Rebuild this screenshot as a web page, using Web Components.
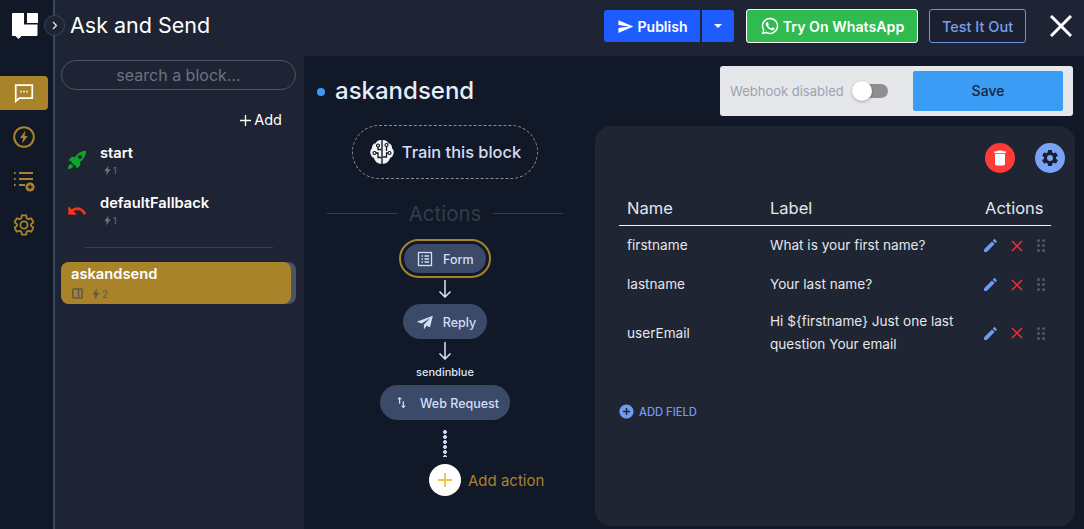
<!DOCTYPE html>
<html>
<head>
<meta charset="utf-8">
<title>Ask and Send</title>
<style>
  html, body { margin: 0; height: 100%; background: #111827; overflow: hidden; }
  body { font-family: Inter, "Noto Sans", sans-serif; }
</style>
</head>
<body>
<app-shell>
  <side-rail slot="rail"></side-rail>
  <top-bar slot="top" heading="Ask and Send"></top-bar>
  <block-panel slot="panel"></block-panel>
  <flow-column slot="flow"></flow-column>
  <div slot="right" style="display:flex;flex-direction:column;align-items:flex-end;height:100%">
    <webhook-bar></webhook-bar>
    <field-card></field-card>
  </div>
</app-shell>

<script>
const P = {
  send: "M2.01 21L23 12 2.01 3 2 10l15 2-15 2z",
  bolt: "M14 1L5 13.5h5.5L9 23l10-13.5h-6z",
  trash: "M6 19c0 1.1.9 2 2 2h8c1.1 0 2-.9 2-2V7H6v12zM19 4h-3.5l-1-1h-5l-1 1H5v2h14V4z",
  gear: "M19.14 12.94c.04-.3.06-.61.06-.94s-.02-.64-.07-.94l2.03-1.58a.49.49 0 0 0 .12-.61l-1.92-3.32a.49.49 0 0 0-.59-.22l-2.39.96c-.5-.38-1.03-.7-1.62-.94l-.36-2.54a.48.48 0 0 0-.48-.41h-3.84c-.24 0-.43.17-.47.41l-.36 2.54c-.59.24-1.13.57-1.62.94l-2.39-.96c-.22-.08-.47 0-.59.22L2.74 8.87c-.12.21-.08.47.12.61l2.03 1.58c-.05.3-.09.63-.09.94s.02.64.07.94l-2.03 1.58a.49.49 0 0 0-.12.61l1.92 3.32c.12.22.37.29.59.22l2.39-.96c.5.38 1.03.7 1.62.94l.36 2.54c.05.24.24.41.48.41h3.84c.24 0 .44-.17.47-.41l.36-2.54c.59-.24 1.13-.56 1.62-.94l2.39.96c.22.08.47 0 .59-.22l1.92-3.32c.12-.22.07-.47-.12-.61l-2.01-1.58zM12 15.6A3.6 3.6 0 1 1 12 8.4a3.6 3.6 0 0 1 0 7.2z",
  edit: "M3 17.25V21h3.75L17.81 9.94l-3.75-3.75L3 17.25zM20.71 7.04c.39-.39.39-1.02 0-1.41l-2.34-2.34c-.39-.39-1.02-.39-1.41 0l-1.83 1.83 3.75 3.75 1.83-1.83z",
  plusCircle: "M12 2C6.48 2 2 6.48 2 12s4.48 10 10 10 10-4.48 10-10S17.52 2 12 2zm5 11h-4v4h-2v-4H7v-2h4V7h2v4h4v2z",
  undo: "M12.5 8c-2.65 0-5.05.99-6.9 2.6L2 7v9h9l-3.62-3.62c1.39-1.16 3.16-1.88 5.12-1.88 3.54 0 6.55 2.31 7.6 5.5l2.37-.78C21.08 11.03 17.15 8 12.5 8z",
  swap: "M16 17.01V10h-2v7.01h-3L15 21l4-3.99h-3zM9 3L5 6.99h3V14h2V6.99h3L9 3z",
  whatsapp: "M12.04 2A9.9 9.9 0 0 0 3.5 16.9L2.1 22l5.24-1.37A9.9 9.9 0 1 0 12.04 2zm0 1.8a8.1 8.1 0 1 1-4.13 15.07l-.3-.18-3.1.81.83-3.03-.2-.31A8.1 8.1 0 0 1 12.04 3.8zM8.6 7.3c-.17 0-.46.06-.7.32-.24.26-.92.9-.92 2.2s.94 2.55 1.07 2.73c.13.17 1.85 2.83 4.49 3.96 2.2.94 2.64.75 3.12.7.48-.04 1.54-.63 1.76-1.24.22-.6.22-1.13.15-1.24-.07-.1-.24-.17-.5-.3-.26-.13-1.54-.76-1.78-.85-.24-.09-.41-.13-.59.13-.17.26-.67.85-.82 1.02-.15.17-.3.2-.56.07-.26-.13-1.1-.41-2.1-1.3-.78-.7-1.3-1.55-1.45-1.81-.15-.26-.02-.4.11-.53.12-.12.26-.3.39-.46.13-.15.17-.26.26-.43.09-.17.04-.33-.02-.46-.07-.13-.58-1.42-.8-1.94-.2-.5-.42-.43-.58-.44z",
  plane: "M22.5 3.5L1 11.5l6.5 2.5L19 6.5 10.5 15.5V22l3.5-5 4.7 2z",
  rocket: "M23 1c-4.7.2-8.6 2-11.7 5.3L9.500 8.300l-4-.1L1.500 12.500l4.300 1-.8 1.200 4.300 4.300 1.200-.8 1 4.300 4.300-4 .1-4.200 2-1.800C21.100 9.500 22.800 5.700 23 1zM15.700 10.700a2.400 2.400 0 1 1 0-4.800 2.400 2.400 0 0 1 0 4.800zM4.500 16.500C2.600 17.200 1.400 19.200 1 23c3.800-.4 5.800-1.600 6.500-3.500z"
};
const svg = (d, size, fill, extra = "") =>
  `<svg width="${size}" height="${size}" viewBox="0 0 24 24" fill="${fill}" style="display:block;flex:none" ${extra}><path d="${d}"/></svg>`;

class AppShell extends HTMLElement {
  constructor() {
    super();
    this.attachShadow({ mode: "open" });
    this.shadowRoot.innerHTML = `
      <style>
        :host { display: grid; grid-template-columns: 53px 2px 249px 291px 1fr; grid-template-rows: 56px 473px; width: 1084px; height: 529px; background: #111827; }
        .rail { grid-row: 1 / 3; grid-column: 1; background: #111827; }
        .rule { grid-row: 1 / 3; grid-column: 2; background: #34495a; }
        .top { grid-row: 1; grid-column: 3 / 6; }
        .panel { grid-row: 2; grid-column: 3; }
        .flow { grid-row: 2; grid-column: 4; }
        .right { grid-row: 2; grid-column: 5; padding-right: 9px; box-sizing: border-box; min-width: 0; }
      </style>
      <div class="rail"><slot name="rail"></slot></div>
      <div class="rule"></div>
      <div class="top"><slot name="top"></slot></div>
      <div class="panel"><slot name="panel"></slot></div>
      <div class="flow"><slot name="flow"></slot></div>
      <div class="right"><slot name="right"></slot></div>`;
  }
}

class SideRail extends HTMLElement {
  constructor() {
    super();
    this.attachShadow({ mode: "open" });
    this.shadowRoot.innerHTML = `
      <style>
        :host { display: flex; flex-direction: column; height: 100%; position: relative; }
        .logo { height: 76px; padding: 13px 0 0 12px; box-sizing: border-box; }
        .item { width: 48px; height: 34px; display: flex; align-items: center; justify-content: center; margin-bottom: 10px; }
        .item.on { background: #a8832a; border-radius: 0 4px 4px 0; }
        .toggle { position: absolute; left: 44px; top: 15px; width: 19px; height: 19px; border: 1px solid #34495a; border-radius: 50%; background: #1e2433; display: flex; align-items: center; justify-content: center; }
      </style>
      <div class="logo">
        <svg width="26" height="27" viewBox="0 0 26 27" fill="#fff" style="display:block">
          <path d="M1 0h11v11.500h13.500V22a1 1 0 0 1-1 1H9.500l-3 3-3-3H1a1 1 0 0 1-1-1V1a1 1 0 0 1 1-1z"/>
          <path d="M15 0h10a1 1 0 0 1 1 1v9H15z"/>
        </svg>
      </div>
      <div class="item on">
        <svg width="22" height="22" viewBox="0 0 24 24" fill="none" stroke="#fff" stroke-width="1.900"><path d="M3 3.500h18v14H7L3 21z"/><path d="M8 10.500h1.600M11.200 10.500h1.600M14.400 10.500H16" stroke-width="2"/></svg>
      </div>
      <div class="item">
        <svg width="24" height="24" viewBox="0 0 24 24" fill="none"><circle cx="12" cy="12" r="9.800" stroke="#a8832a" stroke-width="2"/><path d="M13.400 5.600L8 13h3l-.9 5.400L15.800 11h-3.200z" fill="#a8832a"/></svg>
      </div>
      <div class="item">
        <svg width="24" height="24" viewBox="0 0 24 24" fill="none" stroke="#a8832a" stroke-width="2"><path d="M2 4h1.600M2 10h1.600M2 16h1.600M7 4h14M7 10h14M7 16h6"/><circle cx="18" cy="18" r="4.600" fill="#a8832a" stroke="none"/><path d="M15.700 18h4.600M18 15.700v4.600" stroke="#111827" stroke-width="1.300"/></svg>
      </div>
      <div class="item">
        <svg width="24" height="24" viewBox="0 0 24 24" fill="none" stroke="#a8832a" stroke-width="1.800"><path d="${P.gear}"/></svg>
      </div>
      <div class="toggle">
        <svg width="9" height="9" viewBox="0 0 9 9" fill="none" stroke="#e5e7eb" stroke-width="1.300"><path d="M3 1l3.400 3.500L3 8"/></svg>
      </div>`;
  }
}

class TopBar extends HTMLElement {
  constructor() {
    super();
    this.attachShadow({ mode: "open" });
    this.shadowRoot.innerHTML = `
      <style>
        :host { display: flex; align-items: center; height: 56px; background: #1e2433; padding: 0 12px 4px 15px; box-sizing: border-box; font-family: Inter, sans-serif; }
        h1 { margin: -2px auto 0 0; font: 400 21.500px Inter, sans-serif; color: #fff; }
        .btn { height: 32px; box-sizing: border-box; display: flex; align-items: center; justify-content: center; font-size: 14px; font-weight: 600; color: #fff; border-radius: 3px; }
        .pub { width: 96px; background: #1f5cff; gap: 4px; border-radius: 3px 0 0 3px; }
        .drop { width: 32px; margin-left: 2px; background: #1f5cff; border-radius: 0 3px 3px 0; }
        .caret { width: 0; height: 0; border: 4px solid transparent; border-top: 4px solid #fff; border-bottom: 0; }
        .wa { width: 172px; height: 34px; margin-left: 12px; background: #2fbb4f; border: 1px solid #fff; gap: 3px; font-size: 14.200px; }
        .test { width: 97px; height: 34px; margin-left: 11px; border: 1px solid #6f95e0; color: #7a9fe8; font-weight: 500; font-size: 14.500px; background: #1a2030; }
        .x { margin-left: 24px; display: block; }
      </style>
      <h1></h1>
      <div class="btn pub">${svg(P.send, 17, "#fff")}<span>Publish</span></div>
      <div class="btn drop"><span class="caret"></span></div>
      <div class="btn wa">${svg(P.whatsapp, 20, "#fff")}<span>Try On WhatsApp</span></div>
      <div class="btn test">Test It Out</div>
      <svg class="x" width="22" height="22" viewBox="0 0 22 22" stroke="#fff" stroke-width="3"><path d="M1 1l20 20M21 1L1 21"/></svg>`;
    this.shadowRoot.querySelector("h1").textContent = this.getAttribute("heading");
  }
}

class BlockRow extends HTMLElement {
  constructor() {
    super();
    this.attachShadow({ mode: "open" });
    this.shadowRoot.innerHTML = `
      <style>
        :host { display: flex; align-items: center; height: 50px; padding-left: 6px; }
        .ic { width: 20px; height: 20px; margin-right: 13px; }
        .name { font-size: 14.700px; font-weight: 600; color: #fff; line-height: 20px; }
        .sub { display: flex; align-items: center; font-size: 9px; color: #6b7280; height: 14px; margin-top: 1px; padding-left: 2px; }
      </style>
      <div class="ic"><slot name="icon"></slot></div>
      <div>
        <div class="name"></div>
        <div class="sub">${svg(P.bolt, 11, "#6b7280")}<span>1</span></div>
      </div>`;
    this.shadowRoot.querySelector(".name").textContent = this.getAttribute("name");
  }
}

class BlockPanel extends HTMLElement {
  constructor() {
    super();
    this.attachShadow({ mode: "open" });
    this.shadowRoot.innerHTML = `
      <style>
        :host { display: block; height: 100%; background: #1e2433; padding: 4px 8px 0 6px; box-sizing: border-box; }
        .search { height: 30px; box-sizing: border-box; border: 1px solid #4b5563; border-radius: 15px; display: flex; align-items: center; justify-content: center; color: #6b7280; font-size: 16px; }
        .add { display: flex; justify-content: flex-end; align-items: center; gap: 3px; margin: 20px 14px 5px 0; color: #fff; font-size: 14.500px; line-height: 20px; }
        hr { border: 0; height: 1px; background: #34404f; margin: 12px 23px 14px 24px; }
        .active { height: 42px; border-radius: 8px; background: #4b5563; }
        .fill { height: 42px; width: 230px; border-radius: 8px; background: #a8832a; box-sizing: border-box; padding: 3px 0 0 10px; }
        .name { font-size: 14.700px; font-weight: 600; color: #fff; line-height: 19px; }
        .sub { display: flex; align-items: center; gap: 7px; font-size: 10px; color: #5c5a4e; height: 15px; margin-top: 2px; padding-left: 1px; }
        .sub span { display: flex; align-items: center; }
        .ico { display: block; }
        .back { display: block; margin-top: 1px; }
      </style>
      <div class="search">search a block...</div>
      <div class="add">
        <svg width="11" height="11" viewBox="0 0 11 11" stroke="#fff" stroke-width="1.300"><path d="M5.500 0v11M0 5.500h11"/></svg>
        <span>Add</span>
      </div>
      <block-row name="start"><span class="ico" slot="icon">${svg(P.rocket, 20, "#0da52c")}</span></block-row>
      <block-row name="defaultFallback"><span class="ico back" slot="icon">${svg(P.undo, 20, "#f5361e", 'stroke="#f5361e" stroke-width=".8"')}</span></block-row>
      <hr>
      <div class="active"><div class="fill">
        <div class="name">askandsend</div>
        <div class="sub">
          <svg width="11" height="11" viewBox="0 0 11 11" fill="none" stroke="#5c5a4e" stroke-width="1.500"><rect x=".8" y="1" width="9.400" height="9" rx="1"/><path d="M6.500 1v9"/></svg>
          <span>${svg(P.bolt, 12, "#5c5a4e")}2</span>
        </div>
      </div></div>`;
  }
}

class ActionPill extends HTMLElement {
  static get observedAttributes() { return ["label"]; }
  constructor() {
    super();
    this.attachShadow({ mode: "open" });
    this.shadowRoot.innerHTML = `
      <style>
        :host { display: flex; align-items: center; height: 35px; padding: 0 11px 0 13px; border-radius: 18px; background: #3b4a68; color: #d3def5; font-size: 12.500px; font-weight: 500; gap: 9px; box-sizing: border-box; }
        .ic { display: flex; align-items: center; justify-content: center; width: 18px; height: 18px; }
        .t { padding-top: 1px; }
      </style>
      <span class="ic"><slot></slot></span><span class="t"></span>`;
  }
  attributeChangedCallback(n, o, v) { this.shadowRoot.querySelector(".t").textContent = v; }
}

class FlowColumn extends HTMLElement {
  constructor() {
    super();
    const arrow = `<svg class="arrow" width="14" height="18" viewBox="0 0 14 18" fill="none" stroke="#dbe5fa" stroke-width="1.500"><path d="M7 0v16.500M1.500 11.500L7 17l5.500-5.500"/></svg>`;
    this.attachShadow({ mode: "open" });
    this.shadowRoot.innerHTML = `
      <style>
        :host { display: flex; flex-direction: column; height: 100%; padding-top: 8px; box-sizing: border-box; color: #dbe5fa; }
        .title { display: flex; align-items: center; height: 52px; padding-left: 13px; gap: 10px; box-sizing: border-box; }
        .dot { width: 8px; height: 8px; border-radius: 50%; background: #3b9cf5; margin-top: 3px; }
        .title b { font-weight: 500; font-size: 24px; color: #e5edf9; }
        .center { width: 240px; margin-left: 21px; display: flex; flex-direction: column; align-items: center; }
        .train { width: 186px; height: 54px; box-sizing: border-box; margin: 9px 0 0; border: 1px dashed #8a8f99; border-radius: 27px; display: flex; align-items: center; justify-content: center; gap: 7px; font-size: 16.400px; font-weight: 500; color: #d3def5; }
        .train span { padding-bottom: 1px; }
        .divider { display: flex; align-items: center; gap: 12px; width: 236px; margin-top: 21px; height: 26px; color: #2f3d4a; font-size: 20.500px; }
        .divider i { flex: 1; height: 1px; background: #34404a; }
        .sel { margin: 13px 0 0; padding: 3px; border: 2px solid #a8832a; border-radius: 20px; height: 39px; box-sizing: border-box; display: flex; align-items: center; }
        .sel action-pill { height: 29px; width: 82px; padding: 0 0 0 12px; }
        .arrow { display: block; margin: 3px 0 5px; }
        .cap { font-size: 11px; line-height: 14px; margin: 0 0 6px; font-weight: 500; }
        .dots { width: 4px; height: 27px; margin: 10px 0 7px; background: radial-gradient(circle at 2px 2px, #c5d4ef 1.700px, transparent 2.200px) 0 0 / 4px 5px repeat-y; }
        .addrow { position: relative; width: 32px; height: 32px; border-radius: 50%; background: #fff; display: flex; align-items: center; justify-content: center; }
        .addrow span { position: absolute; left: 39px; top: 7px; white-space: nowrap; color: #a8832a; font-size: 15px; }
      </style>
      <div class="title"><span class="dot"></span><b>askandsend</b></div>
      <div class="center">
        <div class="train">
          <svg width="26" height="26" viewBox="0 0 26 26" style="flex:none">
            <path d="M12.300 1C9 1 7.500 2.500 6.800 4.200 4 4.600 2.800 6.800 3 9.200 1.300 10.500.6 13.500 1.800 15.500c.4 2 1.700 3 3.200 3.400.7 2.800 3 5.600 7.300 5.900zM13.700 1c3.300 0 4.800 1.500 5.500 3.200 2.800.4 4 2.600 3.800 5 1.700 1.300 2.400 4.300 1.200 6.300-.4 2-1.700 3-3.200 3.400-.7 2.800-3 5.600-7.300 5.900z" fill="#f3f3f3"/>
            <path d="M9 7v3.500h3.300M5.500 14H9v4.500h3.300M17.500 6.500V12M21 14h-3.500v4h-3.800" stroke="#111827" stroke-width="1.300" fill="none"/>
            <g fill="#f3f3f3" stroke="#111827" stroke-width="1.200"><circle cx="9" cy="6.500" r="1.500"/><circle cx="5.500" cy="14" r="1.500"/><circle cx="17.500" cy="6" r="1.500"/><circle cx="20.500" cy="14" r="1.500"/></g>
          </svg>
          <span>Train this block</span>
        </div>
        <div class="divider"><i></i><span>Actions</span><i></i></div>
        <div class="sel"><action-pill label="Form">
          <svg width="18" height="18" viewBox="0 0 18 18" fill="none" stroke="#d3def5" stroke-width="1.300"><rect x="2.500" y="2.500" width="13" height="13"/><path d="M5.500 6h1.500M5.500 9h1.500M5.500 12h1.500M8.500 6h4.500M8.500 9h4.500M8.500 12h4.500"/></svg>
        </action-pill></div>
        ${arrow.replace('class="arrow"', 'class="arrow" style="margin:2px 0 6px"')}
        <action-pill label="Reply">${svg(P.plane, 18, "#d3def5")}</action-pill>
        ${arrow}
        <div class="cap">sendinblue</div>
        <action-pill label="Web Request">${svg(P.swap, 15, "#d3def5")}</action-pill>
        <div class="dots"></div>
        <div class="addrow">
          <svg width="16" height="16" viewBox="0 0 16 16" stroke="#f0c14b" stroke-width="1.800"><path d="M8 1v14M1 8h14"/></svg>
          <span>Add action</span>
        </div>
      </div>`;
  }
}

class WebhookBar extends HTMLElement {
  constructor() {
    super();
    this.attachShadow({ mode: "open" });
    this.shadowRoot.innerHTML = `
      <style>
        :host { display: flex; align-items: center; flex: none; width: 353px; height: 50px; margin: 10px 2px 0 0; background: #e5e7eb; border-radius: 3px; box-sizing: border-box; padding: 0 10px; font-size: 13px; }
        .lbl { color: #9ca3af; width: 125px; flex: none; }
        .track { position: relative; width: 33px; height: 14px; border-radius: 7px; background: #8f8f8f; flex: none; }
        .knob { position: absolute; left: -3px; top: -3px; width: 20px; height: 20px; border-radius: 50%; background: #fff; box-shadow: 0 1px 3px rgba(0,0,0,.3); }
        .save { margin-left: auto; width: 150px; height: 40px; padding-bottom: 1px; box-sizing: border-box; display: flex; align-items: center; justify-content: center; background: #3b9cf5; border-radius: 2px; color: #1e2433; font-weight: 500; font-size: 14px; }
      </style>
      <span class="lbl">Webhook disabled</span>
      <span class="track"><span class="knob"></span></span>
      <span class="save">Save</span>`;
  }
}

class FieldRow extends HTMLElement {
  constructor() {
    super();
    this.attachShadow({ mode: "open" });
    this.shadowRoot.innerHTML = `
      <style>
        :host { display: grid; grid-template-columns: 143px 215px 1fr; align-items: center; color: #e5e7eb; font-size: 13.600px; line-height: 23px; padding-left: 8px; }
        .acts { display: flex; align-items: center; gap: 12px; margin-left: -3px; }
        .dots { display: grid; grid-template-columns: 3px 3px; gap: 2px; margin-left: 2px; }
        .dots i { width: 3px; height: 3px; border-radius: 50%; background: #4d5a6b; }
      </style>
      <div class="n"></div><div class="l"></div>
      <div class="acts">
        ${svg(P.edit, 17, "#6f9bf0")}
        <svg width="12" height="12" viewBox="0 0 12 12" stroke="#f0302c" stroke-width="1.500"><path d="M1 1l10 10M11 1L1 11"/></svg>
        <span class="dots"><i></i><i></i><i></i><i></i><i></i><i></i></span>
      </div>`;
    this.shadowRoot.querySelector(".n").textContent = this.getAttribute("name");
    this.shadowRoot.querySelector(".l").textContent = this.getAttribute("label");
  }
}

class FieldCard extends HTMLElement {
  constructor() {
    super();
    this.attachShadow({ mode: "open" });
    this.shadowRoot.innerHTML = `
      <style>
        :host { display: block; flex: none; width: 480px; height: 400px; margin-top: 10px; background: #1f2533; border-radius: 16px; box-sizing: border-box; padding: 17px 24px 0; }
        .tools { display: flex; justify-content: flex-end; gap: 20px; height: 30px; margin-right: -14px; }
        .round { width: 30px; height: 30px; border-radius: 50%; display: flex; align-items: center; justify-content: center; }
        .head { display: grid; grid-template-columns: 143px 215px 1fr; padding: 0 0 5px 8px; margin-top: 23px; width: 424px; border-bottom: 1px solid #f3f4f6; color: #e5e7eb; font-size: 16.500px; line-height: 24px; }
        field-row { width: 424px; }
        .r1 { margin-top: 8px; height: 23px; }
        .r2 { margin-top: 16px; height: 23px; }
        .r3 { margin-top: 14px; height: 46px; }
        .addf { display: flex; align-items: center; gap: 4px; margin: 47px 0 0 -1px; color: #6f9bf0; font-size: 11.200px; font-weight: 500; }
      </style>
      <div class="tools">
        <span class="round" style="background:#ff3b35">${svg(P.trash, 20, "#fff")}</span>
        <span class="round" style="background:#7ba3f5">${svg(P.gear, 20, "#1a2030")}</span>
      </div>
      <div class="head"><span>Name</span><span>Label</span><span>Actions</span></div>
      <field-row class="r1" name="firstname" label="What is your first name?"></field-row>
      <field-row class="r2" name="lastname" label="Your last name?"></field-row>
      <field-row class="r3" name="userEmail" label="Hi \${firstname} Just one last question Your email"></field-row>
      <div class="addf">${svg(P.plusCircle, 17, "#6f9bf0")}<span>ADD FIELD</span></div>`;
  }
}

customElements.define("app-shell", AppShell);
customElements.define("side-rail", SideRail);
customElements.define("top-bar", TopBar);
customElements.define("block-row", BlockRow);
customElements.define("block-panel", BlockPanel);
customElements.define("action-pill", ActionPill);
customElements.define("flow-column", FlowColumn);
customElements.define("webhook-bar", WebhookBar);
customElements.define("field-row", FieldRow);
customElements.define("field-card", FieldCard);
</script>
</body>
</html>
